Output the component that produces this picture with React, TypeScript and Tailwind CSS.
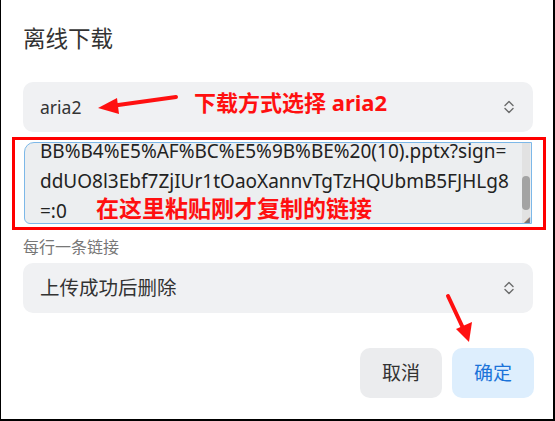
import React from "react";

function UpDown() {
  return (
    <svg width="10" height="16" viewBox="0 0 10 16" fill="none">
      <path d="M1 6.5 L5 2.5 L9 6.5" stroke="#6b6b6b" strokeWidth="1.4" strokeLinecap="round" strokeLinejoin="round" />
      <path d="M1 9.5 L5 13.5 L9 9.5" stroke="#6b6b6b" strokeWidth="1.4" strokeLinecap="round" strokeLinejoin="round" />
    </svg>
  );
}

function SelectBox({ label, small }: { label: string; small?: boolean }) {
  return (
    <div className="h-[50px] w-[510px] rounded-[10px] bg-[#f0f1f3] flex items-center justify-between pl-[17px] pr-[19px]">
      <span className={small ? "text-[17.5px] text-[#333]" : "text-[19.5px] text-[#333]"}>{label}</span>
      <UpDown />
    </div>
  );
}

export default function App() {
  const font = { fontFamily: "'Noto Sans', 'Noto Sans CJK SC', sans-serif" };
  return (
    <div
      className="relative w-[555px] h-[421px] bg-white border-l border-r-2 border-b-2 border-black overflow-hidden"
      style={font}
    >
      <div className="flex flex-col pl-[22px] pt-[24px]">
        {/* Title */}
        <h1 className="text-[22.5px] leading-[30px] text-[#333]">离线下载</h1>

        {/* Download method */}
        <div className="mt-[28px]">
          <SelectBox label="aria2" small />
        </div>

        {/* Links textarea */}
        <div className="mt-[10px] ml-[1px] w-[508px] h-[82px] rounded-tl-[10px] rounded-bl-[6px] border border-[#7db8e8] bg-[#eceef0] flex overflow-hidden">
          <div className="flex-1 overflow-hidden pl-[15px]">
            <div className="-mt-[7px] text-[19px] leading-[30px] text-[#222] whitespace-nowrap">
              <div>BB%B4%E5%AF%BC%E5%9B%BE%20(10).pptx?sign=</div>
              <div>ddUO8l3Ebf7ZjIUr1tOaoXannvTgTzHQUbmB5FJHLg8</div>
              <div>=:0</div>
            </div>
          </div>
          <div className="w-[8px] mr-[1px] flex flex-col bg-[#e2e2e2]">
            <div className="h-[33px]" />
            <div className="h-[34px] rounded-[4px] bg-[#a3a3a3]" />
            <div className="flex-1" />
            <div className="h-[5px] text-[6px] leading-[5px] text-[#777] text-right">◢</div>
          </div>
        </div>

        <p className="mt-[12px] text-[16px] leading-[22px] text-[#777]">每行一条链接</p>

        {/* After upload */}
        <div className="mt-[5px]">
          <SelectBox label="上传成功后删除" />
        </div>

        {/* Buttons */}
        <div className="mt-[35px] w-[511px] flex justify-end gap-[10px]">
          <button className="w-[82px] h-[50px] rounded-[10px] bg-[#ebecee] text-[19px] text-[#333]">取消</button>
          <button className="w-[82px] h-[50px] rounded-[10px] bg-[#ddeefd] text-[19px] text-[#1a73d9]">确定</button>
        </div>
      </div>

      {/* Annotations */}
      <div className="absolute left-[11px] top-[137px] w-[534px] h-[93px] border-[3px] border-[#ff0000] pointer-events-none" />

      <svg className="absolute left-0 top-0 pointer-events-none" width="555" height="421">
        <line x1="175" y1="97" x2="110" y2="106" stroke="#ff1010" strokeWidth="4" strokeLinecap="round" />
        <polygon points="97,108 116,98 118,114" fill="#ff1010" />
        <line x1="447" y1="296" x2="462" y2="328" stroke="#ff1010" strokeWidth="4" strokeLinecap="round" />
        <polygon points="468,342 455,329 471,322" fill="#ff1010" />
      </svg>

      <div className="absolute left-[193px] top-[87px] text-[22px] leading-[30px] font-bold text-[#ff1010]">
        下载方式选择 aria2
      </div>
      <div className="absolute left-[95px] top-[193px] text-[23px] leading-[30px] font-bold text-[#ff1010]">
        在这里粘贴刚才复制的链接
      </div>
    </div>
  );
}
